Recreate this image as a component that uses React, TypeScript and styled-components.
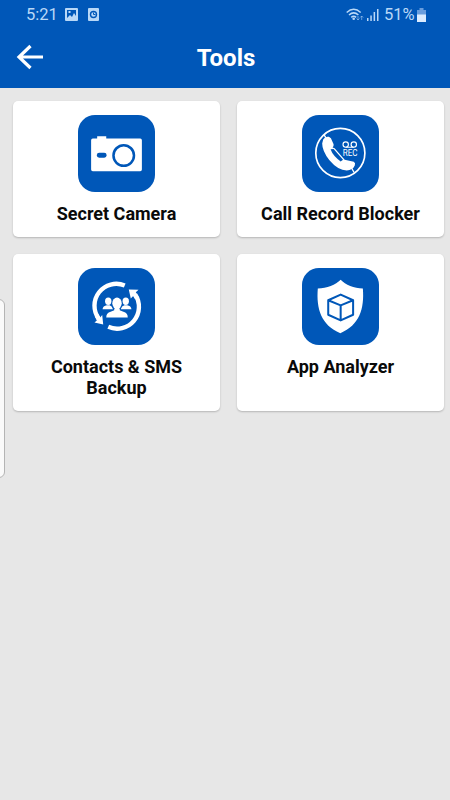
import React from "react";
import styled, { createGlobalStyle } from "styled-components";

const BLUE = "#0057b8";

const Global = createGlobalStyle`
  * { box-sizing: border-box; }
  body { margin: 0; background: #e7e7e7; font-family: Roboto, "Liberation Sans", sans-serif; }
`;

const Screen = styled.div`
  position: relative;
  width: 450px;
  height: 800px;
  overflow: hidden;
  background: #e7e7e7;
`;

const Header = styled.header`
  height: 88px;
  background: ${BLUE};
`;

const StatusBar = styled.div`
  height: 28px;
  padding: 1px 24px 0 26px;
  display: flex;
  justify-content: space-between;
  color: #b9d8f7;
`;

const StatusGroup = styled.div`
  display: flex;
  align-items: center;
  height: 27px;
`;

const StatusText = styled.span<{ $width: number; $gap?: number }>`
  width: ${(p) => p.$width}px;
  margin-left: ${(p) => p.$gap ?? 0}px;
  font-size: 16.5px;
  line-height: 27px;
  white-space: nowrap;
`;

const Glyph = styled.svg<{ $gap?: number }>`
  display: block;
  flex: none;
  margin-left: ${(p) => p.$gap ?? 0}px;
`;

const TitleBar = styled.div`
  height: 60px;
  display: grid;
  grid-template-columns: 60px 1fr 58px;
  align-items: center;
`;

const BackButton = styled.button`
  width: 60px;
  height: 60px;
  padding: 0 0 2px 16px;
  border: 0;
  background: none;
  display: flex;
  align-items: center;
`;

const Title = styled.h1`
  margin: 0;
  text-align: center;
  color: #fff;
  font-size: 24px;
  line-height: 60px;
  font-weight: 700;
`;

const Grid = styled.main`
  display: grid;
  grid-template-columns: 207px 207px;
  grid-template-rows: 136px 157px;
  column-gap: 17px;
  row-gap: 17px;
  padding: 13px 6px 0 13px;
`;

const Card = styled.section`
  display: flex;
  flex-direction: column;
  align-items: center;
  padding-top: 14px;
  border-radius: 5px;
  background: #fff;
  box-shadow: 0 1px 2px rgba(0, 0, 0, 0.22);
`;

const Tile = styled.svg`
  display: block;
  width: 77px;
  height: 77px;
  border-radius: 17px;
  background: ${BLUE};
`;

const Label = styled.h2`
  margin: 11px 0 0;
  max-width: 165px;
  text-align: center;
  color: #0a0a0a;
  font-size: 18px;
  line-height: 21px;
  font-weight: 700;
`;

const EdgeHandle = styled.div`
  position: absolute;
  left: -10px;
  top: 299px;
  width: 15px;
  height: 179px;
  border: 1px solid #b4b4b4;
  border-radius: 6px;
  background: #fafafa;
`;

const CameraTile = () => (
  <Tile viewBox="26 31 229 229">
    <path fill="#fff" d="M70 101h13v-7h27v7h101q5 0 5 5v87q0 5-5 5H70q-5 0-5-5v-87q0-5 5-5z" />
    <rect x="82" y="143" width="29" height="15" rx="7" fill={BLUE} />
    <circle cx="162" cy="151.500" r="30.500" fill="none" stroke={BLUE} strokeWidth="7.500" />
  </Tile>
);

const RecordTile = () => (
  <Tile viewBox="27 30 229 229">
    <circle cx="141" cy="143" r="73" fill="none" stroke="#fff" strokeWidth="5" />
    <path
      fill="#fff"
      d="M90 103Q95 93 107 95L113 99L121 117Q122 122 118 127L124 129L154 163L181 169Q187 173 184 180Q178 194 160 195Q134 195 108 164Q87 137 87 115Z"
    />
    <path fill={BLUE} d="M112 132L121 131L149 163L142 168Q119 152 112 132Z" />
    <path stroke="#fff" strokeWidth="4" fill="none" d="M92 88l8 12M174 187l8 14" />
    <g fill="none" stroke="#fff" strokeWidth="3.500">
      <circle cx="157" cy="118" r="8" />
      <circle cx="181" cy="118" r="8" />
      <path d="M157 126h24" />
    </g>
    <text x="148" y="152" fill="#fff" fontSize="26" textLength="44" lengthAdjust="spacingAndGlyphs">
      REC
    </text>
  </Tile>
);

const ContactsTile = () => (
  <Tile viewBox="26 24 229 229">
    <g fill="none" stroke="#fff" strokeWidth="13">
      <path d="M165 76A65 65 0 0 0 88 175" />
      <path d="M116 199A65 65 0 0 0 196 103" />
    </g>
    <path fill="#fff" d="M177 88L206 89L198 96L207 112L196 118L190 107L183 115zM98 164L101 192L75 186L82 180L76 168L87 161L92 171z" />
    <g fill="#fff">
      <ellipse cx="116" cy="123" rx="9.500" ry="11" />
      <ellipse cx="168" cy="123" rx="9.500" ry="11" />
      <path d="M99 147q1-10 13-12h8q7 2 10 12zM153 147q3-10 11-12h8q12 2 13 12z" />
    </g>
    <g fill="#fff" stroke={BLUE} strokeWidth="4" paintOrder="stroke">
      <path d="M110 171q0-14 13-17l11-4v-8h16v8l11 4q13 3 13 17z" />
      <ellipse cx="142" cy="129" rx="14" ry="17" />
    </g>
    <path fill="#fff" d="M135 141h14v12q-7 6-14 0z" />
  </Tile>
);

const ShieldTile = () => (
  <Tile viewBox="29 24 229 229">
    <path
      fill="#fff"
      d="M144 59C158 74 184 84 210 85C215 145 200 194 143 218C86 194 71 145 76 85C103 84 129 74 144 59Z"
    />
    <path
      fill="none"
      stroke={BLUE}
      strokeWidth="6"
      strokeLinejoin="round"
      d="M144 103l37 17v43l-37 17-37-17v-43zM107 120l37 15 37-15M144 135v45"
    />
  </Tile>
);

const tools = [
  { label: "Secret Camera", Icon: CameraTile },
  { label: "Call Record Blocker", Icon: RecordTile },
  { label: "Contacts & SMS Backup", Icon: ContactsTile },
  { label: "App Analyzer", Icon: ShieldTile },
];

export default function App() {
  return (
    <Screen>
      <Global />
      <Header>
        <StatusBar>
          <StatusGroup>
            <StatusText $width={39}>5:21</StatusText>
            <Glyph width="14" height="13" viewBox="0 0 14 13">
              <path
                fill="currentColor"
                fillRule="evenodd"
                d="M1 0h11q1 0 1 1v11q0 1-1 1H1q-1 0-1-1V1q0-1 1-1zM2 2v8l3-3 2 2 2-4 2 3V2zM3.500 3h2v2h-2z"
              />
            </Glyph>
            <Glyph width="11" height="13" viewBox="0 0 11 13" $gap={9}>
              <rect width="11" height="13" rx="1" fill="currentColor" />
              <circle cx="5.500" cy="6.500" r="3" fill="none" stroke={BLUE} strokeWidth="1.400" />
              <path d="M5.500 4.500v2h2" fill="none" stroke={BLUE} />
            </Glyph>
          </StatusGroup>
          <StatusGroup>
            <Glyph width="18" height="14" viewBox="0 0 18 14">
              <g fill="none" stroke="currentColor" strokeWidth="1.500">
                <path d="M.7 4.500q7-6.500 14 0M3 7q4.700-4.300 9.400 0M5.300 9.400q2.400-2.200 4.800 0" />
                <path d="M12 8v4m-1.500-1.500L12 12l1.500-1.500M15.700 12V8m-1.500 1.500L15.700 8l1.500 1.500" strokeWidth=".8" opacity=".7" />
              </g>
              <circle cx="7.700" cy="10.800" r="1.300" fill="currentColor" />
            </Glyph>
            <Glyph width="13" height="13" viewBox="0 0 13 13" $gap={3}>
              <path fill="currentColor" d="M0 10h1.500v3H0zM3.300 7.500h1.500V13H3.300zM6.600 4h1.500v9H6.600zM10 1h1.500v12H10z" />
            </Glyph>
            <StatusText $width={33} $gap={4}>
              51%
            </StatusText>
            <Glyph width="9" height="14" viewBox="0 0 9 14">
              <path fill="#699ddd" d="M2.500 0h4v2H9v5H0V2h2.500z" />
              <path fill="#dcecff" d="M0 6.500h9V14H0z" />
            </Glyph>
          </StatusGroup>
        </StatusBar>
        <TitleBar>
          <BackButton aria-label="Back">
            <Glyph width="28" height="26" viewBox="0 0 28 26">
              <path
                d="M14.500 2L3 13l11.500 11M3.500 13H27"
                fill="none"
                stroke="#fff"
                strokeWidth="3.200"
              />
            </Glyph>
          </BackButton>
          <Title>Tools</Title>
        </TitleBar>
      </Header>
      <Grid>
        {tools.map(({ label, Icon }) => (
          <Card key={label}>
            <Icon />
            <Label>{label}</Label>
          </Card>
        ))}
      </Grid>
      <EdgeHandle />
    </Screen>
  );
}
